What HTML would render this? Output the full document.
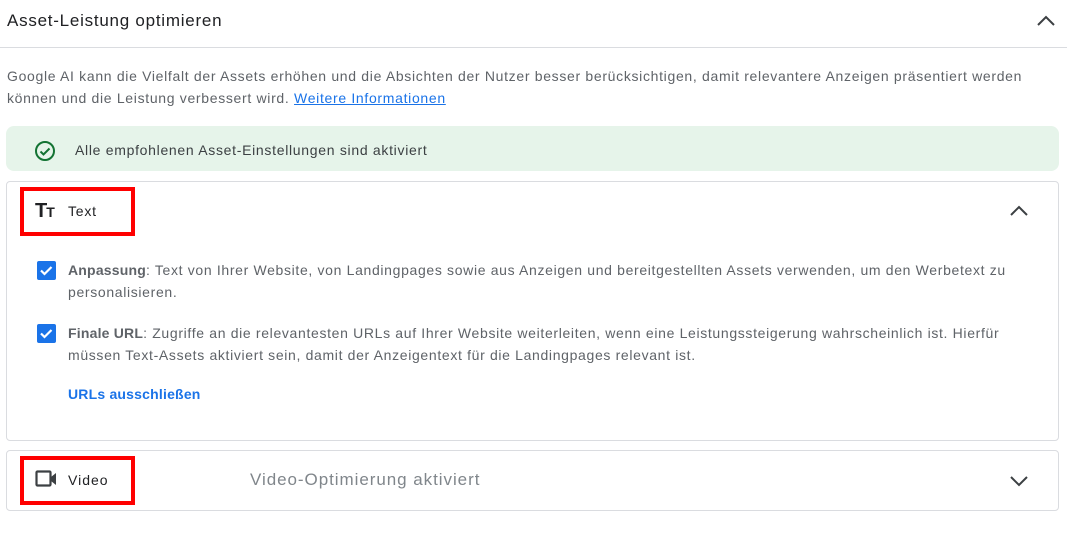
<!DOCTYPE html>
<html><head><meta charset="utf-8"><style>
*{margin:0;padding:0;box-sizing:border-box}
body{width:1067px;height:533px;background:#fff;font-family:"Liberation Sans",Arial,sans-serif;color:#3c4043;position:relative;overflow:hidden}
.a{position:absolute;white-space:nowrap}
.card{position:absolute;border:1px solid #dadce0;border-radius:4px;background:#fff}
.red{position:absolute;border:4px solid #f00}
.cb{position:absolute;width:19px;height:19px;background:#1a73e8;border-radius:2px}
.p{font-size:14px;line-height:22px;color:#5f6368;letter-spacing:0.66px}
.p b{letter-spacing:0.2px}
</style></head><body>
<div class="a" style="left:7px;top:11px;font-size:17px;letter-spacing:0.75px;color:#202124">Asset-Leistung optimieren</div>
<svg class="a" style="left:1035px;top:12px" width="22" height="18" viewBox="0 0 22 18"><path d="M3 13l8-8 8 8" fill="none" stroke="#3c4043" stroke-width="2"/></svg>
<div class="a" style="left:0;top:47px;width:1067px;height:1px;background:#dadce0"></div>
<div class="a p" style="left:7px;top:65px;letter-spacing:0.68px">Google AI kann die Vielfalt der Assets erhöhen und die Absichten der Nutzer besser berücksichtigen, damit relevantere Anzeigen präsentiert werden<br>können und die Leistung verbessert wird. <span style="color:#1a73e8;text-decoration:underline">Weitere Informationen</span></div>
<div class="a" style="left:6px;top:126px;width:1053px;height:45px;background:#e6f4ea;border-radius:8px"></div>
<svg class="a" style="left:34px;top:140px" width="22" height="22" viewBox="0 0 22 22"><circle cx="11" cy="11" r="9" fill="none" stroke="#137333" stroke-width="2"/><path d="M6.5 11.5l3 3 6-6" fill="none" stroke="#137333" stroke-width="2"/></svg>
<div class="a" style="left:75px;top:142px;font-size:14px;letter-spacing:0.7px;color:#3c4043">Alle empfohlenen Asset-Einstellungen sind aktiviert</div>
<div class="card" style="left:6px;top:181px;width:1053px;height:260px"></div>
<div class="red" style="left:20px;top:187px;width:115px;height:49px"></div>
<div class="a" style="left:35px;top:200px;font-size:20px;font-weight:bold;color:#202124;letter-spacing:-1px">T<span style="font-size:14px">T</span></div>
<div class="a" style="left:68px;top:203px;font-size:14px;letter-spacing:0.8px;color:#202124">Text</div>
<svg class="a" style="left:1008px;top:202px" width="22" height="18" viewBox="0 0 22 18"><path d="M3 13l8-8 8 8" fill="none" stroke="#3c4043" stroke-width="2"/></svg>
<div class="cb" style="left:37px;top:261px"><svg width="19" height="19" viewBox="0 0 19 19"><path d="M4 9.5l3.5 3.5 7-7" fill="none" stroke="#fff" stroke-width="2.2"/></svg></div>
<div class="a p" style="left:68px;top:259px"><b style="color:#5f6368">Anpassung</b>: Text von Ihrer Website, von Landingpages sowie aus Anzeigen und bereitgestellten Assets verwenden, um den Werbetext zu<br>personalisieren.</div>
<div class="cb" style="left:37px;top:324px"><svg width="19" height="19" viewBox="0 0 19 19"><path d="M4 9.5l3.5 3.5 7-7" fill="none" stroke="#fff" stroke-width="2.2"/></svg></div>
<div class="a p" style="left:68px;top:322px"><b style="color:#5f6368">Finale URL</b>: Zugriffe an die relevantesten URLs auf Ihrer Website weiterleiten, wenn eine Leistungssteigerung wahrscheinlich ist. Hierfür<br>müssen Text-Assets aktiviert sein, damit der Anzeigentext für die Landingpages relevant ist.</div>
<div class="a" style="left:68px;top:386px;font-size:14px;letter-spacing:0.2px;color:#1a73e8;font-weight:bold">URLs ausschließen</div>
<div class="card" style="left:6px;top:450px;width:1053px;height:61px"></div>
<div class="red" style="left:20px;top:456px;width:115px;height:49px"></div>
<svg class="a" style="left:35px;top:470px" width="24" height="18" viewBox="0 0 24 18"><rect x="1.5" y="1.5" width="14" height="14" rx="1" fill="none" stroke="#3c4043" stroke-width="2.2"/><path d="M16 7l5-4v12l-5-4z" fill="#3c4043"/></svg>
<div class="a" style="left:68px;top:472px;font-size:14px;letter-spacing:1px;color:#202124">Video</div>
<div class="a" style="left:250px;top:470px;font-size:17px;letter-spacing:0.95px;color:#80868b">Video-Optimierung aktiviert</div>
<svg class="a" style="left:1008px;top:472px" width="22" height="18" viewBox="0 0 22 18"><path d="M3 5l8 8 8-8" fill="none" stroke="#3c4043" stroke-width="2"/></svg>
</body></html>
